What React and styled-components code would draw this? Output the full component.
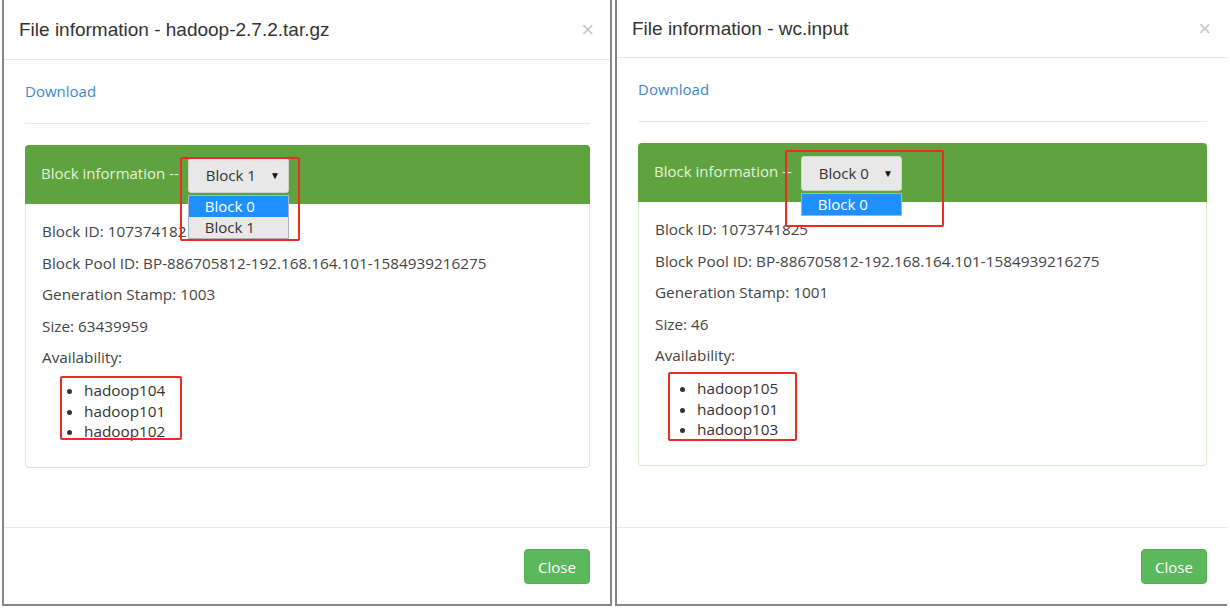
import React from 'react';
import styled, { createGlobalStyle } from 'styled-components';

const GlobalStyle = createGlobalStyle`
  body {
    margin: 0;
    background: #fff;
    font-family: "Open Sans", "Liberation Sans", sans-serif;
  }
`;

const files = [
  {
    name: 'hadoop-2.7.2.tar.gz',
    head: 59,
    selected: 'Block 1',
    options: ['Block 0', 'Block 1'],
    blockMark: { left: -8, top: -1, width: 120, height: 84 },
    listMark: { left: 18, top: -4, width: 122, height: 64 },
    info: {
      id: '107374182',
      pool: 'BP-886705812-192.168.164.101-1584939216275',
      stamp: '1003',
      size: '63439959',
    },
    hosts: ['hadoop104', 'hadoop101', 'hadoop102'],
  },
  {
    name: 'wc.input',
    head: 57,
    selected: 'Block 0',
    options: ['Block 0'],
    blockMark: { left: -16, top: -6, width: 159, height: 77 },
    listMark: { left: 13, top: -6, width: 129, height: 69 },
    info: {
      id: '1073741825',
      pool: 'BP-886705812-192.168.164.101-1584939216275',
      stamp: '1001',
      size: '46',
    },
    hosts: ['hadoop105', 'hadoop101', 'hadoop103'],
  },
];

function FileModal({ file, last }) {
  return (
    <Modal $last={last}>
      <Header $h={file.head}>
        <Title>File information - {file.name}</Title>
        <CloseX>×</CloseX>
      </Header>
      <Body>
        <DownloadLink href="#">Download</DownloadLink>
        <Rule />
        <Panel>
          <PanelHeading>
            <HeadingText>Block information --</HeadingText>
            <SelectWrap>
              <FakeSelect>
                {file.selected}
                <Arrow>▼</Arrow>
              </FakeSelect>
              <OptionList>
                {file.options.map((o, i) => (
                  <Option key={o} $active={i === 0}>{o}</Option>
                ))}
              </OptionList>
              <RedBox style={file.blockMark} />
            </SelectWrap>
          </PanelHeading>
          <PanelBody>
            <Line>Block ID: {file.info.id}</Line>
            <Line>Block Pool ID: {file.info.pool}</Line>
            <Line>Generation Stamp: {file.info.stamp}</Line>
            <Line>Size: {file.info.size}</Line>
            <Line>Availability:</Line>
            <Hosts>
              {file.hosts.map((h) => (
                <li key={h}>{h}</li>
              ))}
              <RedBox style={file.listMark} />
            </Hosts>
          </PanelBody>
        </Panel>
      </Body>
      <Footer>
        <CloseButton>Close</CloseButton>
      </Footer>
    </Modal>
  );
}

export default function App() {
  return (
    <Page>
      <GlobalStyle />
      {files.map((f, i) => (
        <FileModal key={f.name} file={f} last={i === files.length - 1} />
      ))}
    </Page>
  );
}

const Page = styled.div`
  display: flex;
  gap: 3px;
  padding-left: 2px;
  width: 1230px;
  height: 609px;
  box-sizing: border-box;
  overflow: hidden;
`;

const Modal = styled.div`
  display: flex;
  flex-direction: column;
  flex: none;
  width: ${(p) => (p.$last ? '612px' : '610px')};
  height: 606px;
  box-sizing: border-box;
  border: 2px solid #858585;
  border-top: none;
  border-right: ${(p) => (p.$last ? 'none' : '2px solid #858585')};
  background: #fff;
`;

const Header = styled.div`
  display: flex;
  align-items: center;
  justify-content: space-between;
  height: ${(p) => p.$h}px;
  padding: 0 16px 0 15px;
  border-bottom: 1px solid #e7e7e7;
  flex: none;
`;

const Title = styled.h4`
  margin: 0;
  font-family: "Liberation Sans", Arial, sans-serif;
  font-weight: normal;
  font-size: 19px;
  color: #333;
`;

const CloseX = styled.span`
  font-family: "Liberation Sans", Arial, sans-serif;
  font-size: 22px;
  color: #c8c8c8;
  line-height: 1;
`;

const Body = styled.div`
  flex: 1;
  padding: 21px 20px 0 21px;
`;

const DownloadLink = styled.a`
  display: block;
  font-size: 15px;
  line-height: 20px;
  color: #3f86cf;
  text-decoration: none;
`;

const Rule = styled.div`
  height: 1px;
  background: #e7e7e7;
  margin: 22px 0 21px;
`;

const Panel = styled.div`
  border: 1px solid #d9ebcd;
  border-radius: 4px;
`;

const PanelHeading = styled.div`
  display: flex;
  align-items: center;
  gap: 9px;
  height: 59px;
  margin: -1px -1px 0;
  padding: 0 16px;
  background: #5ea33d;
  border-radius: 4px 4px 0 0;
  color: #e6f2dd;
  font-size: 15px;
  position: relative;
  z-index: 2;
`;

const HeadingText = styled.span`
  margin-bottom: 3px;
`;

const SelectWrap = styled.div`
  position: relative;
  margin-top: 1px;
`;

const FakeSelect = styled.div`
  display: flex;
  align-items: center;
  justify-content: space-between;
  width: 101px;
  height: 35px;
  box-sizing: border-box;
  padding: 0 8px 0 17px;
  background: #e8e8e8;
  border: 1px solid #d2d2d2;
  border-radius: 3px;
  color: #333;
  font-size: 15px;
`;

const Arrow = styled.span`
  font-size: 10px;
  color: #111;
`;

const OptionList = styled.div`
  position: absolute;
  top: 37px;
  left: 0;
  width: 101px;
  box-sizing: border-box;
  border: 1px solid #a9b4c2;
  background: #e8e8e8;
`;

const Option = styled.div`
  height: 21px;
  line-height: 21px;
  padding-left: 16px;
  font-size: 15px;
  color: ${(p) => (p.$active ? '#fff' : '#333')};
  background: ${(p) => (p.$active ? '#1e90ff' : '#e8e8e8')};
`;

const RedBox = styled.div`
  position: absolute;
  box-sizing: border-box;
  border: 2px solid #ee2a24;
  border-radius: 2px;
  pointer-events: none;
`;

const PanelBody = styled.div`
  padding: 17px 16px 15px;
  color: #444;
  font-size: 15.3px;
`;

const Line = styled.p`
  margin: 0 0 10.5px;
  line-height: 21px;
`;

const Hosts = styled.ul`
  position: relative;
  margin: 12px 0 10px;
  padding-left: 42px;
  line-height: 20.5px;
  color: #333;
`;

const Footer = styled.div`
  display: flex;
  justify-content: flex-end;
  padding: 21px 20px 20px;
  border-top: 1px solid #e7e7e7;
  flex: none;
`;

const CloseButton = styled.button`
  width: 66px;
  height: 35px;
  background: #5cb85c;
  border: 1px solid #52ae52;
  border-radius: 4px;
  color: #fff;
  font-family: "Open Sans", "Liberation Sans", sans-serif;
  font-size: 15px;
`;
